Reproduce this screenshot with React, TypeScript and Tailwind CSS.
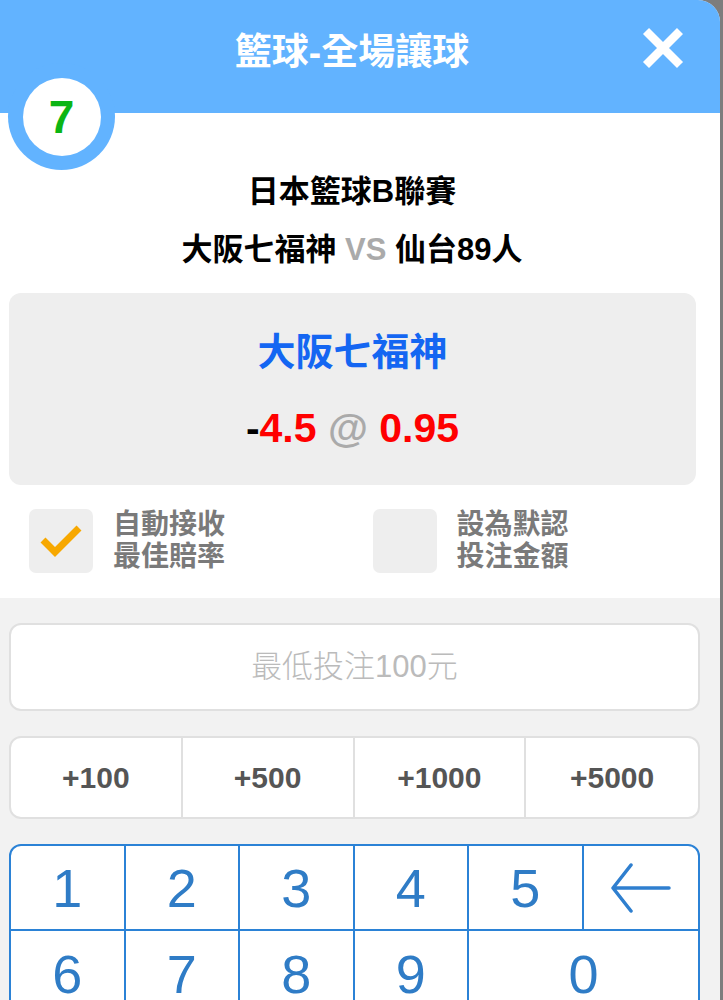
import React from 'react';

const font = { fontFamily: '"Liberation Sans", "Noto Sans CJK TC", sans-serif' };

function CloseIcon() {
  return (
    <svg width="42" height="42" viewBox="0 0 42 42" className="block">
      <path d="M4 4 L38 38 M38 4 L4 38" stroke="#fff" strokeWidth="8.5" strokeLinecap="butt" />
    </svg>
  );
}

function BackIcon() {
  return (
    <svg width="62" height="50" viewBox="0 0 62 50" className="block">
      <path d="M3 25 H59 M21 2 L3 25 L21 48" stroke="#2f7fcf" strokeWidth="3.5" fill="none" strokeLinecap="round" strokeLinejoin="round" />
    </svg>
  );
}

function CheckOption({ checked, lines }: { checked: boolean; lines: string[] }) {
  return (
    <div className="flex items-center gap-[20px]">
      <div className="w-[64px] h-[64px] rounded-[7px] bg-[#eeeeee] flex items-center justify-center">
        {checked && (
          <svg width="44" height="36" viewBox="0 0 44 36">
            <path d="M4 17 L16 29 L40 5" stroke="#f7a800" strokeWidth="7" fill="none" strokeLinecap="butt" />
          </svg>
        )}
      </div>
      <div className="text-[28px] leading-[32px] font-bold text-[#7a7a7a]">
        {lines.map(l => <div key={l}>{l}</div>)}
      </div>
    </div>
  );
}

export default function App() {
  const quick = ['+100', '+500', '+1000', '+5000'];
  const keyCell = 'h-[85px] flex items-center justify-center text-[54px] leading-none text-[#2f7cc6] border-[#2b82d6]';

  return (
    <div className="flex min-h-[1000px] bg-[#7d7d7d]" style={font}>
      <div className="w-[720px] bg-[#f2f2f2] rounded-tr-[22px] overflow-hidden">
        <div className="relative h-[113px] bg-[#62b3ff] flex items-center justify-center pr-[16px]">
          <div className="text-white text-[37px] font-bold leading-none pb-[8px]">籃球-全場讓球</div>
          <div className="absolute right-[36px] top-[27px]">
            <CloseIcon />
          </div>
          <div className="absolute left-[8px] top-[63px] w-[107px] h-[107px] rounded-full bg-[#62b3ff] flex items-center justify-center z-10">
            <div className="w-[78px] h-[78px] rounded-full bg-white flex items-center justify-center text-[46px] font-bold text-[#0cb514] leading-none">
              7
            </div>
          </div>
        </div>

        <div className="bg-white pt-[59px] pb-[25px]">
          <div className="pr-[16px] text-center text-[31px] leading-[40px] font-bold text-black">日本籃球B聯賽</div>
          <div className="pr-[16px] text-center text-[31px] leading-[40px] font-bold text-black mt-[18px]">
            大阪七福神 <span className="text-[#aaaaaa]">VS</span> 仙台89人
          </div>

          <div className="ml-[9px] w-[687px] h-[192px] mt-[23px] rounded-[12px] bg-[#eeeeee] flex flex-col items-center">
            <div className="mt-[37px] text-[38px] leading-[44px] font-bold text-[#1466f2]">大阪七福神</div>
            <div className="mt-[32px] text-[41px] leading-[44px] font-bold">
              <span className="text-black">-</span>
              <span className="text-[#ff0000]">4.5</span>
              <span className="text-[#aaaaaa]"> @ </span>
              <span className="text-[#ff0000]">0.95</span>
            </div>
          </div>

          <div className="grid grid-cols-2 pl-[29px] mt-[24px]">
            <CheckOption checked lines={['自動接收', '最佳賠率']} />
            <div className="-ml-[2px]">
              <CheckOption checked={false} lines={['設為默認', '投注金額']} />
            </div>
          </div>
        </div>

        <div className="px-[9px] pt-[25px] pr-[20px]">
          <div className="h-[88px] bg-white border-2 border-[#e0e0e0] rounded-[12px] flex items-center justify-center text-[31px] font-light text-[#bbbbbb]">
            最低投注100元
          </div>

          <div className="mt-[25px] h-[83px] bg-white border-2 border-[#e0e0e0] rounded-[12px] grid grid-cols-4 overflow-hidden">
            {quick.map((q, i) => (
              <div key={q} className={`flex items-center justify-center text-[30px] font-bold text-[#555555] ${i < 3 ? 'border-r-2 border-[#e0e0e0]' : ''}`}>
                {q}
              </div>
            ))}
          </div>

          <div className="mt-[25px] bg-white border-2 border-[#2b82d6] rounded-t-[12px] grid grid-cols-6 overflow-hidden">
            {['1', '2', '3', '4', '5'].map(d => (
              <div key={d} className={`${keyCell} border-b-2 border-r-2`}>{d}</div>
            ))}
            <div className={`${keyCell} border-b-2`}>
              <BackIcon />
            </div>
            {['6', '7', '8', '9'].map(d => (
              <div key={d} className={`${keyCell} border-r-2`}>{d}</div>
            ))}
            <div className={`${keyCell} col-span-2`}>0</div>
          </div>
        </div>
      </div>
    </div>
  );
}
